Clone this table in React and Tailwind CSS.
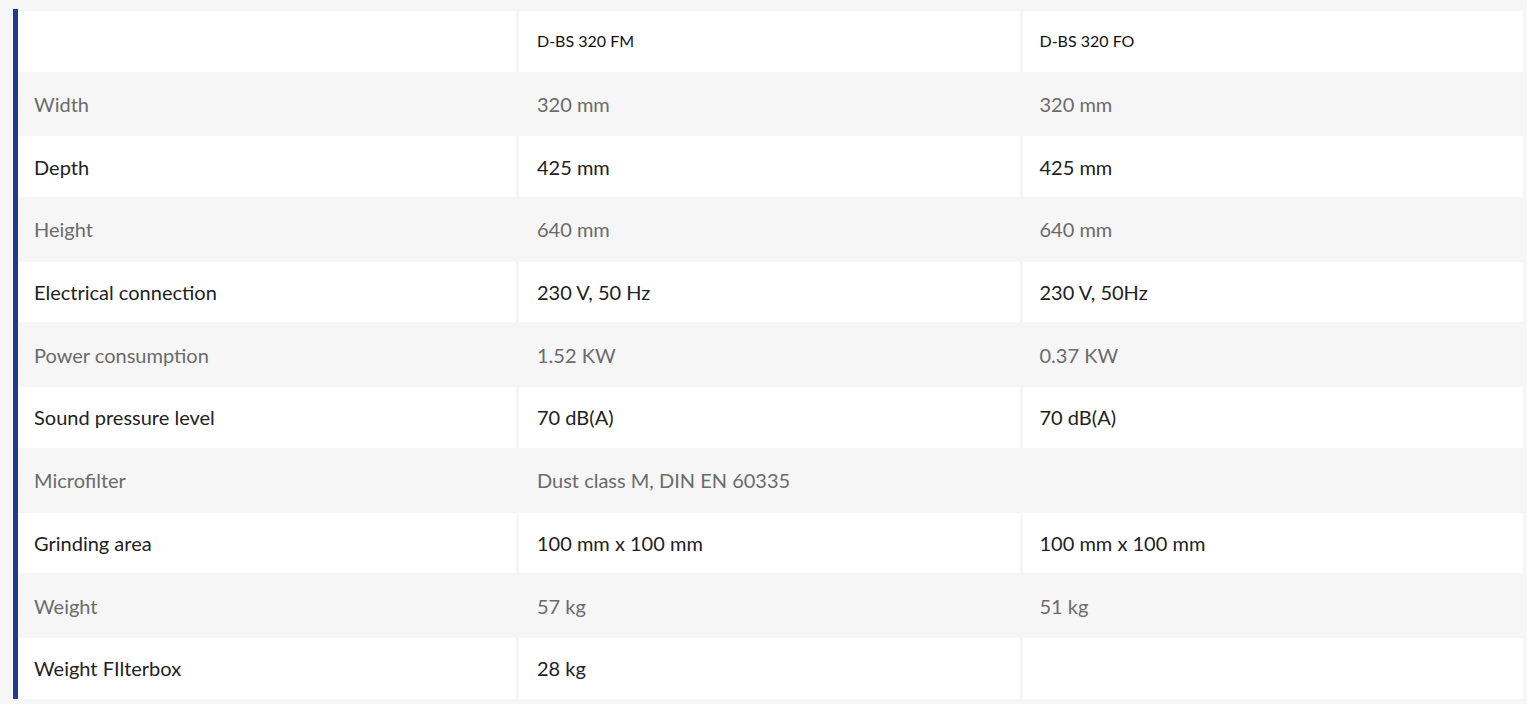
import React from 'react';

const rows = [
  ['Width', '320 mm', '320 mm'],
  ['Depth', '425 mm', '425 mm'],
  ['Height', '640 mm', '640 mm'],
  ['Electrical connection', '230 V, 50 Hz', '230 V, 50Hz'],
  ['Power consumption', '1.52 KW', '0.37 KW'],
  ['Sound pressure level', '70 dB(A)', '70 dB(A)'],
  ['Microfilter', 'Dust class M, DIN EN 60335', ''],
  ['Grinding area', '100 mm x 100 mm', '100 mm x 100 mm'],
  ['Weight', '57 kg', '51 kg'],
  ['Weight FIlterbox', '28 kg', ''],
];

export default function App() {
  return (
    <div className="min-h-screen bg-[#f6f6f6] pl-[13px] pt-[9px] pr-[4px] font-['Lato',sans-serif]">
      <div className="flex">
        {/* blue accent bar */}
        <div className="w-[5px] bg-[#213a8c] shrink-0" />
        <div className="flex-1 pt-[2px] grid grid-cols-[498px_1fr_1fr] gap-x-[3px] gap-y-[2px] auto-rows-[60.7px]">
          {/* header */}
          <div className="bg-white" />
          <div className="bg-white flex items-center pl-[18px] text-[16px] text-[#111]">D-BS 320 FM</div>
          <div className="bg-white flex items-center pl-[17px] text-[16px] text-[#111]">D-BS 320 FO</div>

          {rows.map((r, i) => {
            const grey = i % 2 === 0;
            const cell = grey
              ? 'bg-[#f6f6f6] text-[#6b6b6b]'
              : 'bg-white text-[#222]';
            return (
              <React.Fragment key={r[0]}>
                <div className={`${cell} flex items-center pl-[16px] text-[20px]`}>{r[0]}</div>
                <div className={`${cell} flex items-center pl-[18px] text-[20px]`}>{r[1]}</div>
                <div className={`${cell} flex items-center pl-[17px] text-[20px]`}>{r[2]}</div>
              </React.Fragment>
            );
          })}
        </div>
      </div>
    </div>
  );
}
